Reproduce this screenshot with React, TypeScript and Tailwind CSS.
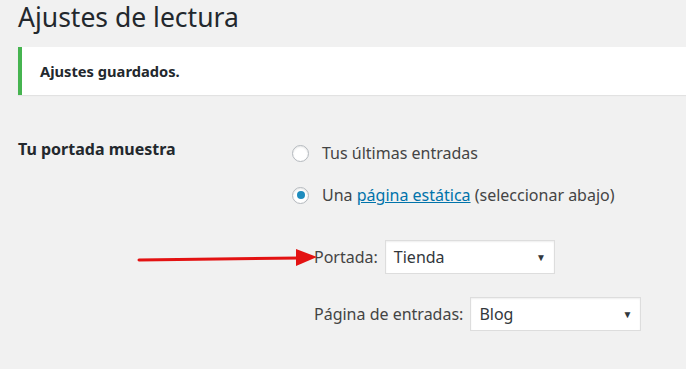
import React from 'react';

function Radio({ checked }: { checked?: boolean }) {
  return (
    <span className="w-[17px] h-[17px] rounded-full border border-[#b4b9be] bg-white shadow-[inset_0_1px_2px_rgba(0,0,0,0.1)] flex items-center justify-center shrink-0">
      {checked && <span className="w-[8px] h-[8px] rounded-full bg-[#1e8cbe]" />}
    </span>
  );
}

function Select({ value, width }: { value: string; width: string }) {
  return (
    <div className={`${width} h-[34px] bg-white border border-[#ddd] shadow-[inset_0_1px_2px_rgba(0,0,0,0.07)] flex items-center justify-between pl-[8px] pr-[8px] text-[16px] text-[#32373c]`}>
      <span>{value}</span>
      <span className="text-[10px] text-[#32373c]">▼</span>
    </div>
  );
}

export default function App() {
  return (
    <div className="w-[686px] h-[369px] overflow-hidden bg-[#f1f1f1] font-['Noto_Sans',sans-serif] text-[#444] pl-[18px]">
      {/* Title */}
      <h1 className="text-[26.5px] leading-[34px] text-[#23282d]">Ajustes de lectura</h1>

      {/* Notice */}
      <div className="mt-[13px] h-[48px] bg-white border-l-4 border-[#46b450] shadow-[0_1px_1px_rgba(0,0,0,0.06)] flex items-center pl-[18px]">
        <p className="text-[14.7px] font-bold text-[#23282d]">Ajustes guardados.</p>
      </div>

      {/* Form */}
      <div className="flex mt-[45px]">
        <div className="w-[274px] shrink-0 text-[16px] font-bold text-[#23282d] leading-[18px]">Tu portada muestra</div>
        <div className="flex flex-col">
          <label className="flex items-center gap-[13px] text-[16px] h-[26px]">
            <Radio />
            <span>Tus últimas entradas</span>
          </label>
          <label className="flex items-center gap-[13px] text-[16px] h-[26px] mt-[16px]">
            <Radio checked />
            <span>
              Una <span className="text-[#0073aa] underline">página estática</span> (seleccionar abajo)
            </span>
          </label>
          <div className="pl-[22px] flex flex-col mt-[32px]">
            <div className="relative flex items-center gap-[7px] text-[16px]">
              {/* red arrow */}
              <svg className="absolute left-[-178px] top-[6px]" width="182" height="22" viewBox="0 0 182 22">
                <line x1="3" y1="14" x2="164" y2="12" stroke="#e31212" strokeWidth="3" strokeLinecap="round" />
                <polygon points="160,3 181,11 160,20" fill="#e31212" />
              </svg>
              <span>Portada:</span>
              <Select value="Tienda" width="w-[170px]" />
            </div>
            <div className="flex items-center gap-[7px] text-[16px] mt-[23px]">
              <span>Página de entradas:</span>
              <Select value="Blog" width="w-[171px]" />
            </div>
          </div>
        </div>
      </div>
    </div>
  );
}
